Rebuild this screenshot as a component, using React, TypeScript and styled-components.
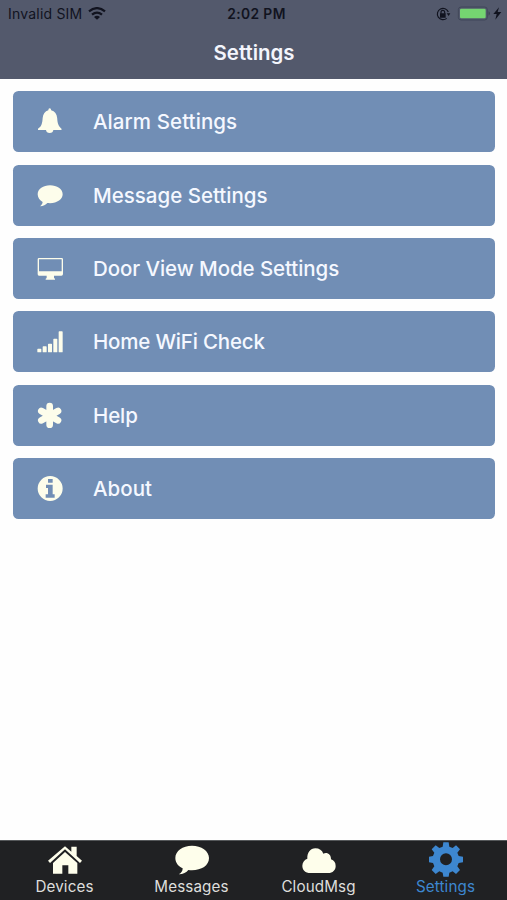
import React from "react";
import styled, { createGlobalStyle } from "styled-components";

const GlobalStyle = createGlobalStyle`
  * { box-sizing: border-box; }
  body { margin: 0; background: #fefefe; font-family: Inter, "Liberation Sans", sans-serif; }
`;

const Screen = styled.div`
  height: 900px;
  display: flex;
  flex-direction: column;
  overflow: hidden;
`;

const Header = styled.header`
  height: 79px;
  flex: none;
  background: #53596c;
`;

const StatusBar = styled.div`
  height: 27px;
  padding: 0 5px 0 8px;
  display: grid;
  grid-template-columns: 1fr auto 1fr;
  align-items: center;
  color: #11131f;
`;

const Carrier = styled.div`
  display: flex;
  align-items: center;
  gap: 6px;
  font-size: 14px;
  letter-spacing: 0.2px;
  white-space: nowrap;
`;

const Clock = styled.div`
  padding-left: 3px;
  font-size: 13.8px;
  font-weight: 600;
  letter-spacing: 0.4px;
`;

const Indicators = styled.div`
  display: flex;
  align-items: center;
  justify-content: flex-end;
`;

const Title = styled.h1`
  margin: 0;
  height: 51px;
  padding-left: 1px;
  text-align: center;
  color: #f3f5fc;
  font-size: 20.4px;
  line-height: 51px;
  font-weight: 600;
  letter-spacing: 0;
`;

const List = styled.main`
  flex: 1;
  display: flex;
  flex-direction: column;
  gap: 12.3px;
  padding: 12.4px 12.5px 0 13px;
`;

const Row = styled.button`
  height: 61px;
  flex: none;
  display: flex;
  align-items: center;
  gap: 29.5px;
  padding: 1px 0 0 23.5px;
  border: 0;
  border-radius: 5.5px;
  background: #718eb5;
  color: #f5f8ff;
  text-align: left;
  font-family: inherit;
`;

const RowLabel = styled.span<{ $spacing: number }>`
  font-size: 20.5px;
  font-weight: 500;
  line-height: 26px;
  letter-spacing: ${(p) => p.$spacing}px;
`;

const RowIcon = styled.svg`
  width: 27px;
  height: 28px;
  flex: none;
  fill: #fdfdeb;
`;

const TabBar = styled.nav`
  height: 60px;
  flex: none;
  padding-left: 1px;
  display: grid;
  grid-template-columns: repeat(4, 127px);
  background: #202123;
  border-top: 1px solid #55585a;
`;

const Tab = styled.div<{ $active?: boolean }>`
  display: flex;
  flex-direction: column;
  align-items: center;
  padding-top: 1px;
  color: ${(p) => (p.$active ? "#3d87d0" : "#dededc")};
  fill: ${(p) => (p.$active ? "#3d87d0" : "#fefeeb")};
  font-size: 15.2px;
  line-height: 20px;
  letter-spacing: 0.12px;
`;

const TabIcon = styled.svg`
  width: 36px;
  height: 35px;
  flex: none;
`;

const glyphs = {
  alarm: (
    <path d="M38 1q4.500 0 4.500 6c11 3 17 11 18 23 1 17 4 25 13 32v4H49q-1 9-11 9T27 66H3v-4c10-6 13-15 14-32 1-12 7-20 17-23q0-6 4-6z" />
  ),
  message: (
    <path d="M39 10C19 10 2 21 2 37c0 10 6 18 15 23-1 6-4 10-8 13 10-1 17-5 22-10 26 3 46-9 46-26C77 21 60 10 39 10z" />
  ),
  monitor: (
    <path fillRule="evenodd" d="M6 9h68q4 0 4 4v44q0 5-5 5H51v6q0 2 3 3v3H26v-3q3-1 3-3v-6H6q-4 0-4-5V13q0-4 4-4zm0 4v36h68V13z" />
  ),
  signal: (
    <path d="M3 62h8q2 0 2 2v7q0 2-2 2H3q-2 0-2-2v-7q0-2 2-2zm16-7h8q2 0 2 2v14q0 2-2 2h-8q-2 0-2-2V57q0-2 2-2zm16-8h8q2 0 2 2v22q0 2-2 2h-8q-2 0-2-2V49q0-2 2-2zm16-15h8q2 0 2 2v37q0 2-2 2h-8q-2 0-2-2V34q0-2 2-2zm16-22h8q2 0 2 2v59q0 2-2 2h-8q-2 0-2-2V12q0-2 2-2z" />
  ),
  help: (
    <g stroke="#fdfdeb" strokeWidth="20">
      <path d="M38 12v56M13 27l50 28M13 55l50-28" strokeLinecap="round" />
    </g>
  ),
  about: (
    <path fillRule="evenodd" d="M39.500 3a37.500 37.500 0 1 0 0 75a37.500 37.500 0 1 0 0-75zM33 12h14v11H33zM27 29h20v29h6v10H26V58h7V39h-6z" />
  ),
};

const rows: { label: string; glyph: keyof typeof glyphs; spacing: number }[] = [
  { label: "Alarm Settings", glyph: "alarm", spacing: 0.08 },
  { label: "Message Settings", glyph: "message", spacing: 0 },
  { label: "Door View Mode Settings", glyph: "monitor", spacing: -0.08 },
  { label: "Home WiFi Check", glyph: "signal", spacing: -0.18 },
  { label: "Help", glyph: "help", spacing: -0.1 },
  { label: "About", glyph: "about", spacing: 0.05 },
];

const tabs = [
  {
    label: "Devices",
    art: <path d="M54 13l19 16V14h16v28l16 14-6 7-45-41L9 63l-6-7zM54 30l37 33v32H64V70H46v25H18V63z" />,
  },
  {
    label: "Messages",
    art: <path d="M54 11C26 11 4 27 4 48c0 14 9 25 22 31 0 8-4 14-12 18 14-1 23-5 29-13 34 4 62-11 62-36 0-21-23-37-51-37z" />,
  },
  {
    label: "CloudMsg",
    art: <path d="M28 93C13 93 4 84 4 71c0-10 6-18 15-21-1-17 9-31 24-31 12 0 20 6 24 16 10-6 24 1 23 17 9 3 14 10 14 20 0 13-9 21-22 21z" />,
  },
  {
    label: "Settings",
    active: true,
    art: (
      <path fillRule="evenodd" d="M46 1h16l2 13 10 4 10-8 12 12-8 10 4 10 13 2v17l-13 2-4 10 8 11-12 12-10-8-10 4-2 12H46l-2-12-10-4-11 8-12-12 8-11-4-10-12-2V44l12-2 4-10-8-10 12-12 11 8 10-4zM54 34a18 18 0 1 0 0 36a18 18 0 1 0 0-36z" />
    ),
  },
];

function WifiIcon() {
  return (
    <svg width="18" height="13" viewBox="0 0 54 39" fill="none" stroke="#11131f" strokeWidth="7">
      <path d="M3 13Q27-6 51 13M12 23q15-12 30 0" />
      <path d="M18 30q9-7 18 0l-9 8z" fill="#11131f" stroke="none" />
    </svg>
  );
}

function DeviceIndicators() {
  return (
    <Indicators>
      <svg width="66" height="16" viewBox="0 0 198 48">
        <g fill="none" stroke="#11131f" strokeWidth="3.500">
          <path d="M37 18A17 17 0 1 0 32 37" />
          <path d="M15 23v-4q0-6 5.500-6t5.500 6v4" />
        </g>
        <path d="M12 22h17v13H12zM32 22h11l-5 8z" fill="#11131f" />
        <rect x="67" y="3" width="87" height="39" rx="8" fill="none" stroke="#41475a" strokeWidth="3" />
        <rect x="72" y="8" width="77" height="29" rx="4" fill="#75d571" />
        <path d="M158 16q6 6 0 13z" fill="#303647" />
        <path d="M189 4l-17 20h10l-4 17 18-23h-11z" fill="#11131f" />
      </svg>
    </Indicators>
  );
}

export default function App() {
  return (
    <Screen>
      <GlobalStyle />
      <Header>
        <StatusBar>
          <Carrier>
            Invalid SIM
            <WifiIcon />
          </Carrier>
          <Clock>2:02 PM</Clock>
          <DeviceIndicators />
        </StatusBar>
        <Title>Settings</Title>
      </Header>
      <List>
        {rows.map((row) => (
          <Row key={row.label}>
            <RowIcon viewBox="0 0 81 84">{glyphs[row.glyph]}</RowIcon>
            <RowLabel $spacing={row.spacing}>{row.label}</RowLabel>
          </Row>
        ))}
      </List>
      <TabBar>
        {tabs.map((tab) => (
          <Tab key={tab.label} $active={tab.active}>
            <TabIcon viewBox="0 0 108 105">{tab.art}</TabIcon>
            {tab.label}
          </Tab>
        ))}
      </TabBar>
    </Screen>
  );
}
